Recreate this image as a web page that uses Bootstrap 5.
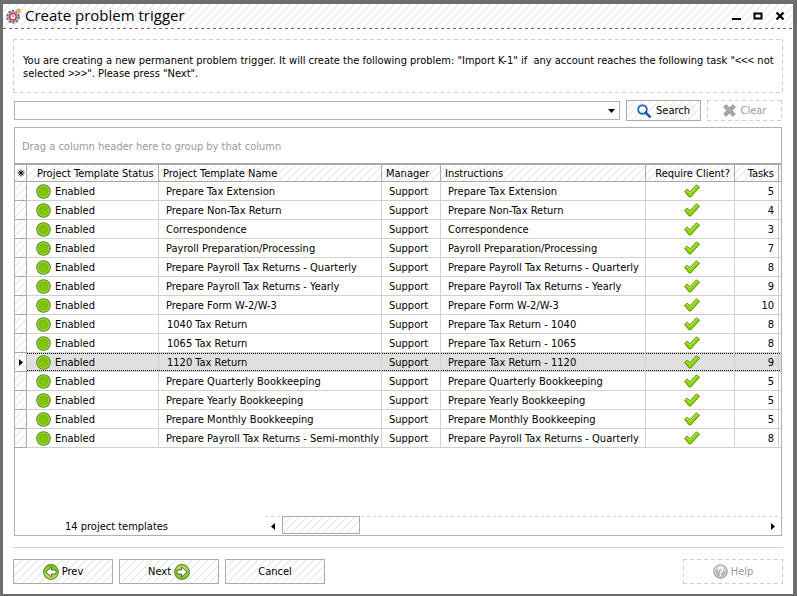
<!DOCTYPE html>
<html lang="en">
<head>
<meta charset="utf-8">
<meta name="viewport" content="width=device-width, initial-scale=1">
<title>Create problem trigger</title>
<link href="https://cdn.jsdelivr.net/npm/bootstrap@5.3.0/dist/css/bootstrap.min.css" rel="stylesheet">
<style>
  body { font-family: "DejaVu Sans Condensed", "DejaVu Sans", sans-serif; font-size: 11px; line-height: 13px; color: #000; background: #fff; }
  .window { border: solid #6d6d6d; border-width: 4px 4px 2px 3px; }
  .hatch { background: #fff linear-gradient(135deg, #fff 42%, #e6e6e6 50%, #fff 58%) 0 0 / 8px 8px; }
  .title-bar { height: 24px; padding: 0 2px 0 3px; }
  .title-bar h1 { font-family: "Open Sans", "Noto Sans", sans-serif; font-size: 15px; line-height: 22px; margin-left: 3px; padding-bottom: 2px; }
  .win-btn { width: 22px; height: 22px; padding: 0; border: 0; background: none; line-height: 0; }
  .dash-x { height: 1px; background: repeating-linear-gradient(90deg, var(--dash) 0 3px, transparent 3px 6px); }
  .dash-dark { --dash: #6d6d6d; }
  .dash-light { --dash: #d0d0d0; }
  .dash-box {
    background:
      repeating-linear-gradient(90deg, #d0d0d0 0 4px, transparent 4px 7px) top / 100% 1px no-repeat,
      repeating-linear-gradient(90deg, #d0d0d0 0 4px, transparent 4px 7px) bottom / 100% 1px no-repeat,
      repeating-linear-gradient(180deg, #d0d0d0 0 4px, transparent 4px 7px) left / 1px 100% no-repeat,
      repeating-linear-gradient(180deg, #d0d0d0 0 4px, transparent 4px 7px) right / 1px 100% no-repeat;
  }
  .content { padding: 10px; }
  .notice { min-height: 54px; padding: 15px 1px 10px 10px; }
  .angles { font-family: "Liberation Sans", sans-serif; }
  .search-row { margin: 7px 1px 6px 1px; }
  .search-box { height: 19px; border: 1px solid #b0b0b0; border-radius: 0; padding: 0 20px 0 4px; font-size: 11px; line-height: 13px; appearance: none; background: #fff; }
  .drop { position: absolute; right: 5px; top: 8px; line-height: 0; pointer-events: none; }
  .tool, .tool:disabled { width: 75px; height: 21px; padding: 0; border-radius: 0; font-size: 11px; line-height: 13px; color: #000; border: 1px solid #ababab; gap: 5px; opacity: 1; }
  .wide, .wide:disabled { width: 100px; height: 25px; gap: 3px; }
  .tool.dash-box:disabled { border-color: transparent; color: #999; background-origin: border-box; }
  .middle { margin: 0 6px; }
  .grid-box { border: 1px solid #b0b0b0; margin: 0 1px; }
  .group-bar { color: #999; padding: 12px 7px 10px; }
  .templates { width: 100%; table-layout: fixed; border-collapse: separate; border-spacing: 0; border-top: 2px solid #a9a9a9; }
  .templates th { height: 17px; padding: 1px 4px 0 4px; font-weight: 400; border-right: 1px solid #a9a9a9; border-bottom: 1px solid #a9a9a9; white-space: nowrap; overflow: hidden; }
  .templates .status-head { padding: 1px 0 0 10px; }
  .templates td { height: 19px; padding: 1px 2px 0 7px; border-right: 1px solid #d0d0d0; border-bottom: 1px solid #d0d0d0; white-space: nowrap; overflow: hidden; }
  .templates .marker { padding: 0; text-align: center; line-height: 0; border-color: #a9a9a9; }
  .templates .state { padding: 0 0 0 9px; }
  .templates .year { padding-left: 8px; }
  .templates .tick { padding: 0 0 0 4px; text-align: center; line-height: 0; }
  .templates .count { text-align: right; padding: 1px 4px 0 0; }
  .templates .rest { padding: 0; border-right: 0; }
  .current td:not(.marker) { background:
      repeating-linear-gradient(90deg, #000 0 1px, transparent 1px 2px) top / 100% 1px no-repeat,
      repeating-linear-gradient(90deg, #000 0 1px, transparent 1px 2px) bottom / 100% 1px no-repeat, #e0e0e0; }
  .grid-foot { height: 19px; }
  .grid-foot .total { width: 250px; padding: 4px 0 0 50px; }
  .scroll-track { padding-right: 3px; }
  .scroll-row { height: 18px; }
  .arrow { width: 16px; height: 18px; border: 0; padding: 0; background: none; line-height: 0; }
  .thumb { width: 78px; height: 18px; border: 1px solid #ababab; margin: -1px 0 0 1px; }
  .rule { height: 1px; background: #d0d0d0; margin: 11px 0; }
</style>
</head>
<body>
<svg width="0" height="0" class="position-absolute" aria-hidden="true">
  <defs>
    <radialGradient id="ball" cx="50%" cy="60%" r="55%"><stop offset="0" stop-color="#86c80c"/><stop offset="1" stop-color="#79b80a"/></radialGradient>
    <linearGradient id="lime" x1="0" y1="0" x2="0" y2="1"><stop offset="0" stop-color="#c0e46a"/><stop offset="1" stop-color="#7ec012"/></linearGradient>
    <linearGradient id="grey" x1="0" y1="0" x2="0" y2="1"><stop offset="0" stop-color="#d6d6d6"/><stop offset="1" stop-color="#a4a4a4"/></linearGradient>
    <symbol id="dot" viewBox="0 0 16 16"><circle cx="8" cy="8" r="7.2" fill="url(#ball)" stroke="#4c8a1c" stroke-width="1.1"/><circle cx="8" cy="8" r="6.1" fill="none" stroke="#b2df62" stroke-width=".9"/></symbol>
    <symbol id="check" viewBox="0 0 16 14"><path d="M.7 7.5 3.1 5.1 6 7.8 12.4.9 15.5 3.2 6.6 13.1 5.1 12.9z" fill="#8fd400" stroke="#4d8f10" stroke-width="1" stroke-linejoin="round"/><path d="M2 7.3 3.2 6.2 6 9 12.5 2.1 14 3.2" fill="none" stroke="#c8f060" stroke-width=".8"/></symbol>
    <symbol id="go" viewBox="0 0 16 16"><circle cx="8" cy="8" r="7.4" fill="url(#lime)" stroke="#5c9022" stroke-width="1.1"/><path d="M3 6h4.500V3L13 8l-5.500 5V10H3z" fill="#fff" stroke="#4a6f3a" stroke-width="1" stroke-linejoin="round"/></symbol>
  </defs>
</svg>
<main class="window d-flex flex-column min-vh-100">
  <header>
    <div class="title-bar hatch d-flex align-items-center">
      <svg width="16" height="16" viewBox="0 0 16 16" aria-hidden="true">
        <circle cx="7" cy="8.800" r="5.800" fill="none" stroke="#596887" stroke-width="2" stroke-dasharray="2.400 1.250"/>
        <circle cx="7" cy="8.800" r="4.900" fill="#d3dbe8" stroke="#8090ad" stroke-width="1"/>
        <circle cx="7" cy="8.800" r="3.200" fill="#fff" stroke="#d43630" stroke-width="1.500"/>
        <path d="M7 7v2.300" stroke="#a33" stroke-width="1" fill="none"/>
        <path d="M12.500.3v5.400M9.800 3h5.400M10.600 1.100l3.800 3.800M14.400 1.100l-3.800 3.800" stroke="#d99a4c" stroke-width="1.200"/><circle cx="12.500" cy="3" r="1.600" fill="#f6b860"/>
      </svg>
      <h1 class="mb-0 fw-normal flex-grow-1">Create problem trigger</h1>
      <button class="win-btn" type="button" aria-label="Minimize"><svg width="10" height="8"><path d="M1 6h9v2H1z"/></svg></button>
      <button class="win-btn" type="button" aria-label="Maximize"><svg width="10" height="8"><path d="M1.500 1.500h7v5h-7z" fill="none" stroke="#000" stroke-width="2"/></svg></button>
      <button class="win-btn" type="button" aria-label="Close"><svg width="10" height="8"><path d="M1.500.5l7 7M8.500.5l-7 7" stroke="#000" stroke-width="2.200"/></svg></button>
    </div>
    <div class="dash-x dash-dark"></div>
  </header>

  <div class="content d-flex flex-column flex-grow-1">
    <p class="notice dash-box m-0">You are creating a new permanent problem trigger. It will create the following problem: "Import K-1" if &nbsp;any account reaches the following task "<span class="angles">&lt;&lt;&lt;</span> not selected <span class="angles">&gt;&gt;&gt;</span>". Please press "Next".</p>

    <form class="search-row d-flex align-items-center">
      <div class="position-relative flex-grow-1">
        <select class="search-box d-block w-100" aria-label="Search templates"><option></option></select>
        <span class="drop"><svg width="7" height="4"><path d="M0 0h7L3.500 4z"/></svg></span>
      </div>
      <button type="button" class="btn tool hatch middle d-flex align-items-center justify-content-center">
        <svg width="14" height="14" viewBox="0 0 14 14" aria-hidden="true"><circle cx="5.500" cy="5.500" r="4.300" fill="#fff" stroke="#2464c4" stroke-width="1.900"/><path d="M8.700 8.700l4 4" stroke="#2056b0" stroke-width="2.500" stroke-linecap="round"/></svg>
        Search</button>
      <button type="button" class="btn tool dash-box d-flex align-items-center justify-content-center" disabled>
        <svg width="13" height="13" viewBox="0 0 13 13" aria-hidden="true"><path d="M3 .7 6.500 4 10 .7 12.300 3 9 6.500l3.300 3.500L10 12.300 6.500 9 3 12.300.7 10 4 6.500.7 3z" fill="#aaa" stroke="#888" stroke-width=".9" stroke-linejoin="round"/></svg>
        Clear</button>
    </form>

    <section class="grid-box d-flex flex-column flex-grow-1">
      <div class="group-bar">Drag a column header here to group by that column</div>
      <table class="templates">
        <colgroup><col style="width:12px"><col style="width:132px"><col style="width:223px"><col style="width:59px"><col><col style="width:89px"><col style="width:44px"><col style="width:2px"></colgroup>
        <thead>
          <tr class="hatch">
            <th class="marker" scope="col" aria-label="Row marker"><svg width="8" height="8"><path d="M4 .5v7M.5 4h7M1.500 1.500l5 5M6.500 1.500l-5 5" stroke="#000"/></svg></th>
            <th scope="col" class="status-head">Project Template Status</th><th scope="col">Project Template Name</th><th scope="col">Manager</th><th scope="col">Instructions</th><th scope="col" class="text-end">Require Client?</th><th scope="col" class="text-end">Tasks</th><th class="rest" aria-hidden="true"></th>
          </tr>
        </thead>
        <tbody id="rows"></tbody>
      </table>
      <div class="grid-foot d-flex mt-auto">
        <div class="total">14 project templates</div>
        <div class="scroll-track flex-grow-1">
          <div class="dash-x dash-light"></div>
          <div class="scroll-row d-flex">
            <button class="arrow" type="button" aria-label="Scroll left"><svg width="4" height="7"><path d="M4 0v7L0 3.500z"/></svg></button>
            <div class="thumb hatch"></div>
            <button class="arrow ms-auto text-end" type="button" aria-label="Scroll right"><svg width="7" height="7"><path d="M0 0v7l4-3.500z"/></svg></button>
          </div>
        </div>
      </div>
    </section>

    <div class="rule"></div>
    <footer class="d-flex">
      <button type="button" class="btn tool wide hatch d-flex align-items-center justify-content-center">
        <svg width="16" height="16" aria-hidden="true"><use href="#go" transform="rotate(180 8 8)"/></svg>Prev</button>
      <button type="button" class="btn tool wide hatch middle d-flex align-items-center justify-content-center">Next
        <svg width="16" height="16" aria-hidden="true"><use href="#go"/></svg></button>
      <button type="button" class="btn tool wide hatch d-flex align-items-center justify-content-center">Cancel</button>
      <button type="button" class="btn tool wide dash-box d-flex align-items-center justify-content-center ms-auto" disabled>
        <svg width="15" height="15" viewBox="0 0 15 15" aria-hidden="true"><circle cx="7.500" cy="7.500" r="6.800" fill="url(#grey)" stroke="#999"/><circle cx="7.500" cy="7.500" r="5.600" fill="none" stroke="#e6e6e6" stroke-width=".8"/><path d="M5.300 5.900c0-3.200 4.600-3 4.500-.3C9.700 7.200 7.600 7.200 7.600 9.200M7.600 10.300v1.700" fill="none" stroke="#fff" stroke-width="1.700"/></svg>Help</button>
    </footer>
  </div>
</main>
<script src="https://cdn.jsdelivr.net/npm/bootstrap@5.3.0/dist/js/bootstrap.bundle.min.js"></script>
<script>
  const rows = [
    ["Prepare Tax Extension", "Prepare Tax Extension", 5],
    ["Prepare Non-Tax Return", "Prepare Non-Tax Return", 4],
    ["Correspondence", "Correspondence", 3],
    ["Payroll Preparation/Processing", "Payroll Preparation/Processing", 7],
    ["Prepare Payroll Tax Returns - Quarterly", "Prepare Payroll Tax Returns - Quarterly", 8],
    ["Prepare Payroll Tax Returns - Yearly", "Prepare Payroll Tax Returns - Yearly", 9],
    ["Prepare Form W-2/W-3", "Prepare Form W-2/W-3", 10],
    ["1040 Tax Return", "Prepare Tax Return - 1040", 8],
    ["1065 Tax Return", "Prepare Tax Return - 1065", 8],
    ["1120 Tax Return", "Prepare Tax Return - 1120", 9],
    ["Prepare Quarterly Bookkeeping", "Prepare Quarterly Bookkeeping", 5],
    ["Prepare Yearly Bookkeeping", "Prepare Yearly Bookkeeping", 5],
    ["Prepare Monthly Bookkeeping", "Prepare Monthly Bookkeeping", 5],
    ["Prepare Payroll Tax Returns - Semi-monthly", "Prepare Payroll Tax Returns - Quarterly", 8]
  ];
  document.getElementById("rows").innerHTML = rows.map(([name, info, tasks], i) => `
    <tr class="${i === 9 ? "current" : ""}">
      <td class="marker hatch">${i === 9 ? '<svg width="4" height="7"><path d="M0 0v7l4-3.500z"/></svg>' : ""}</td>
      <td class="state"><div class="d-flex align-items-center"><svg width="15" height="15" class="me-1"><use href="#dot"/></svg>Enabled</div></td>
      <td class="${/^1/.test(name) ? "year" : ""}">${name}</td>
      <td>Support</td>
      <td>${info}</td>
      <td class="tick"><svg width="16" height="14" role="img" aria-label="Yes"><use href="#check"/></svg></td>
      <td class="count">${tasks}</td>
      <td class="rest"></td>
    </tr>`).join("");
</script>
</body>
</html>
